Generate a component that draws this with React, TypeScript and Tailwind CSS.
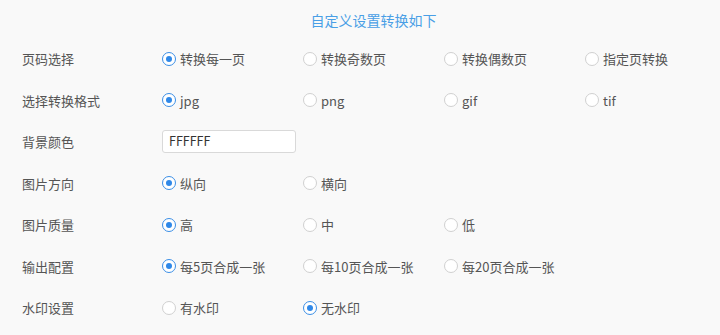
import React, { useState } from "react";

type Row = { label: string; options?: string[]; selected?: number; input?: string };

const rows: Row[] = [
  { label: "页码选择", options: ["转换每一页", "转换奇数页", "转换偶数页", "指定页转换"], selected: 0 },
  { label: "选择转换格式", options: ["jpg", "png", "gif", "tif"], selected: 0 },
  { label: "背景颜色", input: "FFFFFF" },
  { label: "图片方向", options: ["纵向", "横向"], selected: 0 },
  { label: "图片质量", options: ["高", "中", "低"], selected: 0 },
  { label: "输出配置", options: ["每5页合成一张", "每10页合成一张", "每20页合成一张"], selected: 0 },
  { label: "水印设置", options: ["有水印", "无水印"], selected: 1 },
];

function Radio({ checked }: { checked: boolean }) {
  return checked ? (
    <span className="w-[14px] h-[14px] rounded-full border border-[#3a8ee6] bg-white flex items-center justify-center shrink-0">
      <span className="w-[6px] h-[6px] rounded-full bg-[#2f88e8]" />
    </span>
  ) : (
    <span className="w-[14px] h-[14px] rounded-full border border-[#d0d0d0] bg-white shrink-0" />
  );
}

function OptionRow({ row }: { row: Row }) {
  const [sel, setSel] = useState(row.selected ?? 0);
  return (
    <div className="flex items-center h-[41.5px]">
      <div className="w-[140px] shrink-0 text-[13px] text-[#555]">{row.label}</div>
      {row.input !== undefined ? (
        <div className="w-[134px] h-[23px] border border-[#d9d9d9] rounded-[3px] bg-white flex items-center pl-[6px] text-[12.5px] text-[#333]">
          {row.input}
        </div>
      ) : (
        row.options!.map((o, i) => (
          <div
            key={o}
            className="w-[141px] shrink-0 flex items-center gap-[4px] cursor-pointer"
            onClick={() => setSel(i)}
          >
            <Radio checked={sel === i} />
            <span className="text-[13px] text-[#555] leading-none">{o}</span>
          </div>
        ))
      )}
    </div>
  );
}

export default function App() {
  return (
    <div
      className="w-[720px] h-[335px] bg-[#f9f9f9] overflow-hidden"
      style={{ fontFamily: '"Noto Sans CJK SC", "Noto Sans", sans-serif' }}
    >
      <div className="h-[38px] pt-[2px] pl-[27px] flex items-center justify-center text-[14px] text-[#4a9fe6]">
        自定义设置转换如下
      </div>
      <div className="pl-[22px]">
        {rows.map((r) => (
          <OptionRow key={r.label} row={r} />
        ))}
      </div>
    </div>
  );
}
